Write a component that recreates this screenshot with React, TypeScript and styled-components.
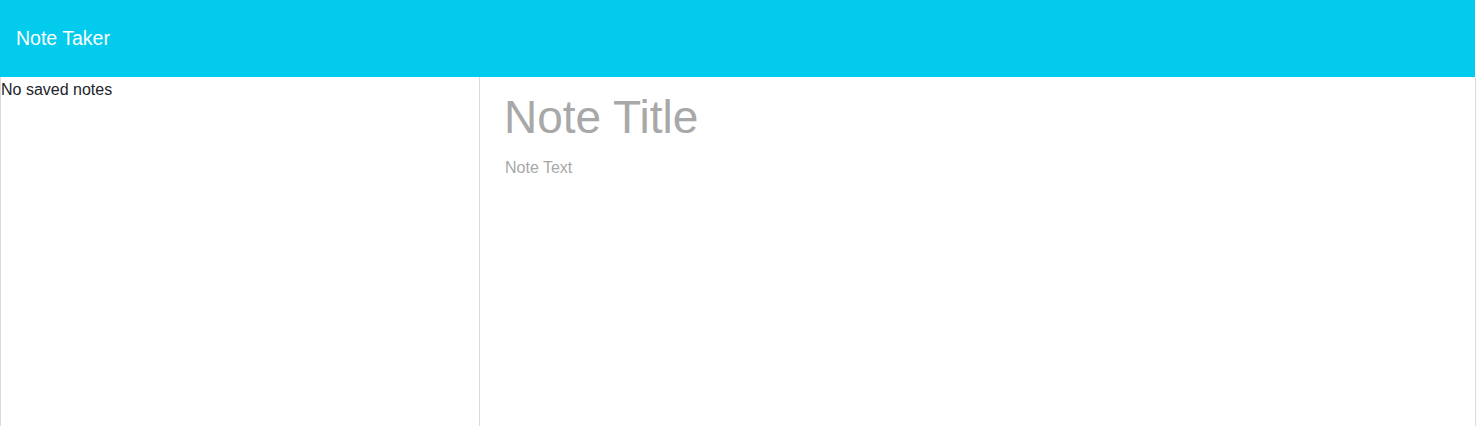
import React from "react";
import styled, { createGlobalStyle } from "styled-components";

const Global = createGlobalStyle`
  html, body { margin: 0; padding: 0; background: #fff; }
  body { font-family: "Liberation Sans", Arial, sans-serif; color: #212529; }
  * { box-sizing: border-box; }
`;

const Page = styled.div`
  width: 1476px;
  height: 426px;
  display: flex;
  flex-direction: column;
  overflow: hidden;
`;

const NavBar = styled.nav`
  height: 77px;
  width: 1475px;
  background: #03cbed;
  display: flex;
  align-items: center;
  padding: 0 16px;
`;

const Brand = styled.a`
  color: #fff;
  font-size: 19.5px;
  line-height: 1.5;
  text-decoration: none;
`;

const Main = styled.div`
  flex: 1;
  display: grid;
  grid-template-columns: 480px 1fr;
`;

const ListColumn = styled.div`
  border-left: 1px solid #dcdcdc;
  border-right: 1px solid #dcdcdc;
  padding: 3px 0 0 0;
`;

const EmptyNote = styled.div`
  font-size: 16px;
  line-height: 20px;
  color: #212529;
`;

const EditorColumn = styled.div`
  border-right: 1px solid #dcdcdc;
  display: flex;
  flex-direction: column;
  padding: 12px 24px 0 24px;
`;

const TitleInput = styled.input`
  border: none;
  outline: none;
  font-family: "Liberation Sans", Arial, sans-serif;
  font-size: 46px;
  line-height: 57px;
  height: 57px;
  padding: 0;
  color: #212529;
  background: transparent;
  &::placeholder { color: #a8a8a8; opacity: 1; }
`;

const TextArea = styled.textarea`
  border: none;
  outline: none;
  resize: none;
  font-family: "Liberation Sans", Arial, sans-serif;
  font-size: 16px;
  line-height: 24px;
  margin-top: 10px;
  padding: 0 0 0 1px;
  height: 200px;
  color: #212529;
  background: transparent;
  &::placeholder { color: #a8a8a8; opacity: 1; }
`;

export default function App() {
  return (
    <Page>
      <Global />
      <NavBar>
        <Brand href="#">Note Taker</Brand>
      </NavBar>
      <Main>
        <ListColumn>
          <EmptyNote>No saved notes</EmptyNote>
        </ListColumn>
        <EditorColumn>
          <TitleInput placeholder="Note Title" />
          <TextArea placeholder="Note Text" />
        </EditorColumn>
      </Main>
    </Page>
  );
}
